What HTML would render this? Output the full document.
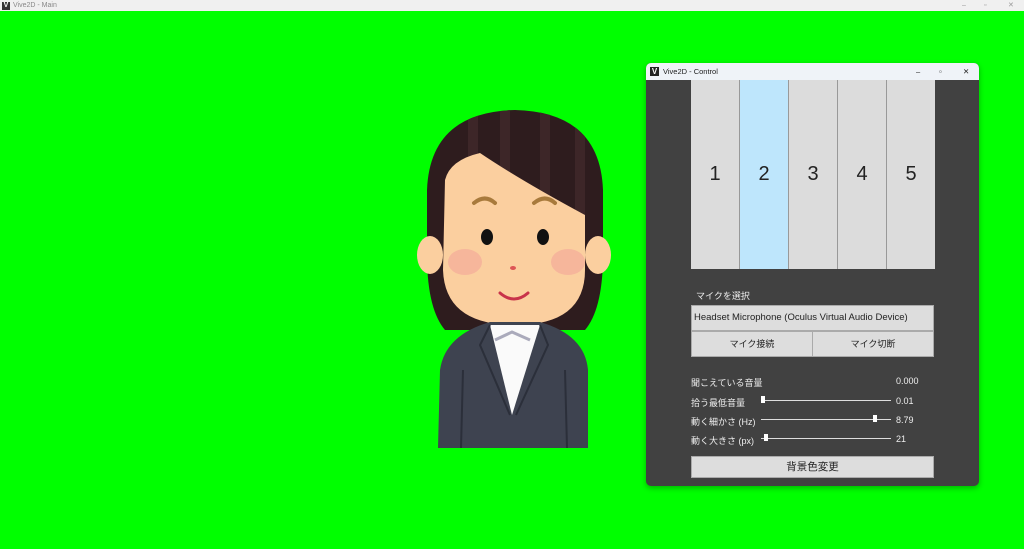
<!DOCTYPE html>
<html><head><meta charset="utf-8"><style>
*{margin:0;padding:0;box-sizing:border-box}
body{width:1024px;height:549px;background:#00ff00;position:relative;overflow:hidden;font-family:"Liberation Sans","Noto Sans CJK JP",sans-serif}
.mt{position:absolute;left:0;top:0;width:1024px;height:11px;background:#f0f0f0;font-size:7px;color:#888;line-height:11px}
.ab{position:absolute}
.win{position:absolute;left:646px;top:63px;width:333px;height:423px;background:#414141;border-radius:5px;overflow:hidden;box-shadow:0 2px 6px rgba(0,0,0,.3)}
.tb{height:17px;background:#eff3f8;font-size:7.5px;color:#222;line-height:17px;position:relative}
.cell{position:absolute;top:17px;height:189px;width:49px;background:#dcdcdc;border-right:1px solid #999;font-size:20px;color:#222;text-align:center;line-height:189px}
.lbl{position:absolute;font-size:9px;color:#eee}
.btn{position:absolute;background:#dddddd;color:#222;font-size:9.5px;text-align:center;border:1px solid #aaa}
.sl{position:absolute;height:1px;background:#ddd}
.th{position:absolute;width:4px;height:7px;background:#fff}
</style></head><body>
<div class="mt"><span class="ab" style="left:2px;top:2px;width:8px;height:8px;background:#333;color:#fff;font-size:7px;line-height:8px;text-align:center;font-weight:bold">V</span><span class="ab" style="left:13px">Vive2D - Main</span><span class="ab" style="left:962px;color:#999">–</span><span class="ab" style="left:984px;color:#999">▫</span><span class="ab" style="left:1008px;color:#999">✕</span></div>

<svg class="ab" style="left:0;top:0" width="1024" height="549">
<defs><clipPath id="h"><path d="M445 330 Q428 310 427 260 L427 190 Q430 112 515 110 Q600 112 603 190 L603 260 Q602 310 585 330 Z"/></clipPath></defs>
<path d="M445 330 Q428 310 427 260 L427 190 Q430 112 515 110 Q600 112 603 190 L603 260 Q602 310 585 330 Z" fill="#2e1c1e"/>
<g fill="#3d2628" clip-path="url(#h)"><rect x="468" y="110" width="10" height="100"/><rect x="500" y="110" width="10" height="100"/><rect x="540" y="110" width="10" height="100"/><rect x="575" y="110" width="10" height="170"/></g>
<ellipse cx="430" cy="255" rx="13" ry="19" fill="#fbcf9f"/>
<ellipse cx="598" cy="255" rx="13" ry="19" fill="#fbcf9f"/>
<path d="M445 180 Q450 160 480 153 Q520 180 585 215 L585 270 Q585 325 515 325 Q445 325 443 270 Z" fill="#fbcf9f"/>
<ellipse cx="465" cy="262" rx="17" ry="13" fill="#f4a59a" opacity=".6"/>
<ellipse cx="568" cy="262" rx="17" ry="13" fill="#f4a59a" opacity=".6"/>
<path d="M474 203 Q485 194 495 203" stroke="#a87a3c" stroke-width="4" fill="none" stroke-linecap="round"/>
<path d="M534 203 Q545 194 555 203" stroke="#a87a3c" stroke-width="4" fill="none" stroke-linecap="round"/>
<ellipse cx="487" cy="237" rx="6" ry="8" fill="#111"/>
<ellipse cx="543" cy="237" rx="6" ry="8" fill="#111"/>
<ellipse cx="513" cy="268" rx="3" ry="2" fill="#d55"/>
<path d="M500 293 Q514 305 528 293" stroke="#c8334a" stroke-width="3" fill="none" stroke-linecap="round"/>
<path d="M438 448 L440 370 Q445 335 490 322 L540 322 Q585 335 588 370 L588 448 Z" fill="#3e4350"/>
<path d="M490 325 L540 325 L512 415 Z" fill="#fafafa"/>
<path d="M495 340 L512 332 L530 340" stroke="#aab" stroke-width="3" fill="none"/>
<path d="M490 325 L480 345 L510 415 M540 325 L548 345 L516 415" stroke="#2b2f3a" stroke-width="2" fill="none"/>
<path d="M463 370 L461 448 M565 370 L567 448" stroke="#2b2f3a" stroke-width="2"/>
</svg>

<div class="win">
<div class="tb"><span class="ab" style="left:4px;top:4px;width:9px;height:9px;background:#222;color:#fff;font-size:8px;line-height:9px;text-align:center;font-weight:bold">V</span><span class="ab" style="left:17px">Vive2D - Control</span><span class="ab" style="left:270px">–</span><span class="ab" style="left:293px">▫</span><span class="ab" style="left:317px">✕</span></div>
<div class="cell" style="left:45px">1</div>
<div class="cell" style="left:94px;background:#bee6fc">2</div>
<div class="cell" style="left:143px">3</div>
<div class="cell" style="left:192px">4</div>
<div class="cell" style="left:241px;border-right:none;width:48px">5</div>
<div class="lbl" style="left:50px;top:226px">マイクを選択</div>
<div class="btn" style="left:45px;top:242px;width:243px;height:26px;text-align:left;padding-left:2px;line-height:24px;font-size:9.5px">Headset Microphone (Oculus Virtual Audio Device)</div>
<div class="btn" style="left:45px;top:268px;width:122px;height:26px;line-height:24px;font-size:9px">マイク接続</div>
<div class="btn" style="left:166px;top:268px;width:122px;height:26px;line-height:24px;font-size:9px">マイク切断</div>
<div class="lbl" style="left:45px;top:313px">聞こえている音量</div><div class="lbl" style="left:250px;top:313px">0.000</div>
<div class="lbl" style="left:45px;top:333px">拾う最低音量</div><div class="lbl" style="left:250px;top:333px">0.01</div>
<div class="sl" style="left:115px;top:337px;width:130px"></div><div class="th" style="left:115px;top:333px"></div>
<div class="lbl" style="left:45px;top:352px">動く細かさ (Hz)</div><div class="lbl" style="left:250px;top:352px">8.79</div>
<div class="sl" style="left:115px;top:356px;width:130px"></div><div class="th" style="left:227px;top:352px"></div>
<div class="lbl" style="left:45px;top:371px">動く大きさ (px)</div><div class="lbl" style="left:250px;top:371px">21</div>
<div class="sl" style="left:115px;top:375px;width:130px"></div><div class="th" style="left:118px;top:371px"></div>
<div class="btn" style="left:45px;top:393px;width:243px;height:22px;line-height:20px;font-size:10.5px">背景色変更</div>
</div>
</body></html>
